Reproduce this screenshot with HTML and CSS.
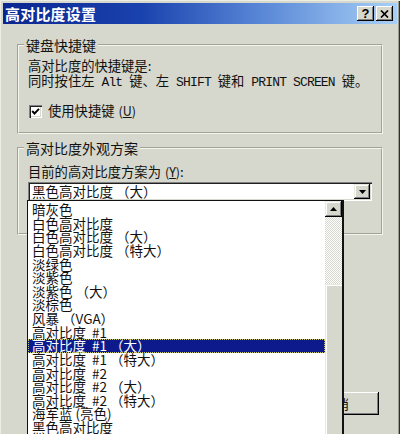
FILE: index.html
```html
<!DOCTYPE html>
<html lang="zh-CN">
<head>
<meta charset="utf-8">
<title>高对比度设置</title>
<link rel="stylesheet" href="styles.css">
</head>
<body>
<div class="window">
  <div class="titlebar">
    <span class="title">高对比度设置</span>
    <div class="tb-buttons">
      <span class="tb-btn help">?</span>
      <span class="tb-btn close"><svg width="9" height="8" viewBox="0 0 9 8"><path d="M1 0.5 L8 7.5 M8 0.5 L1 7.5" stroke="#000" stroke-width="1.7" fill="none"/></svg></span>
    </div>
  </div>
  <div class="content">
    <fieldset class="group g1">
      <legend>键盘快捷键</legend>
      <p class="line first">高对比度的快捷键是:</p>
      <p class="line">同时按住左<span class="mono"> Alt </span>键、左<span class="mono"> SHIFT </span>键和<span class="mono"> PRINT SCREEN </span>键。</p>
      <label class="check"><span class="box"><svg width="9" height="9" viewBox="0 0 9 9"><polyline points="1.2,4 3.5,6.5 8,1.8" stroke="#000" stroke-width="1.9" fill="none"/></svg></span>使用快捷键<span class="acc">(<u>U</u>)</span></label>
    </fieldset>
    <fieldset class="group g2">
      <legend>高对比度外观方案</legend>
      <p class="label2">目前的高对比度方案为<span class="acc">(<u>Y</u>)</span>:</p>
      <div class="combo">
        <span class="combo-text">黑色高对比度 （大）</span>
        <span class="combo-btn"><svg width="7" height="4" viewBox="0 0 7 4"><polygon points="0,0 7,0 3.5,4" fill="#000"/></svg></span>
      </div>
    </fieldset>
    <div class="actions"><span class="btn">取消</span></div>
  </div>
  <div class="dropdown">
    <ul class="list">
      <li>暗灰色</li>
      <li>白色高对比度</li>
      <li>白色高对比度 （大）</li>
      <li>白色高对比度 （特大）</li>
      <li>淡绿色</li>
      <li>淡紫色</li>
      <li>淡紫色 （大）</li>
      <li>淡棕色</li>
      <li>风暴 （VGA）</li>
      <li>高对比度  #1</li>
      <li class="selected">高对比度  #1 （大）</li>
      <li>高对比度  #1 （特大）</li>
      <li>高对比度  #2</li>
      <li>高对比度  #2 （大）</li>
      <li>高对比度  #2 （特大）</li>
      <li>海军蓝 (亮色)</li>
      <li>黑色高对比度</li>
    </ul>
    <div class="scrollbar">
      <span class="sb-up"><svg width="7" height="4" viewBox="0 0 7 4"><polygon points="0,4 7,4 3.5,0" fill="#000"/></svg></span>
      <span class="sb-track"></span>
      <span class="sb-thumb"></span>
    </div>
  </div>
</div>
</body>
</html>
```
FILE: styles.css
```css
html, body {
  margin: 0;
  padding: 0;
}
body {
  width: 400px;
  height: 434px;
  overflow: hidden;
  background: #d6d8cd;
  font-family: "Noto Sans CJK SC", "Noto Sans", sans-serif;
  color: #111;
}
.window {
  position: relative;
  width: 400px;
  height: 434px;
  box-sizing: border-box;
  padding: 3px 3px 0 3px;
  box-shadow: inset 1px 1px 0 #eceee4, inset -1px 0 0 #303030, inset -2px 0 0 #9a9c94;
}
.titlebar {
  height: 21px;
  display: flex;
  align-items: center;
  justify-content: space-between;
  padding: 0 4px 0 2px;
  background: linear-gradient(to right, #0a2690 0%, #1a42ae 35%, #5886d6 65%, #a8d0f6 100%);
}
.title {
  color: #fff;
  font-weight: bold;
  font-size: 15px;
  line-height: 21px;
  letter-spacing: 0.2px;
}
.tb-buttons {
  display: flex;
  gap: 2px;
}
.tb-btn {
  width: 17px;
  height: 15px;
  box-sizing: border-box;
  background: #d6d8cd;
  box-shadow: inset -1px -1px 0 #000, inset 1px 1px 0 #fff, inset -2px -2px 0 #808080;
  display: flex;
  align-items: center;
  justify-content: center;
  font-family: "Liberation Sans", sans-serif;
  font-weight: bold;
  font-size: 13px;
  line-height: 15px;
  color: #000;
}
.content {
  padding: 13px 14px 0 14px;
}
.group {
  margin: 0;
  padding: 0 9px;
  border: 2px groove #f4f6ec;
  min-width: 0;
}
.group legend {
  padding: 0 2px;
  margin-left: -4px;
  font-size: 14px;
  line-height: 16px;
}
.line {
  margin: 0;
  font-size: 13.3px;
  line-height: 15px;
  white-space: nowrap;
}
.line.first {
  margin-top: 5px;
}
.mono {
  font-family: "Liberation Mono", monospace;
  font-size: 13px;
  letter-spacing: -0.85px;
  white-space: pre;
}
.acc {
  font-size: 12.5px;
  margin-left: 4px;
}
.check {
  display: flex;
  align-items: center;
  margin-top: 13px;
  height: 16px;
  font-size: 13.3px;
  line-height: 16px;
}
.box {
  width: 13px;
  height: 13px;
  box-sizing: border-box;
  margin: 0 6px 0 1px;
  background: #fff;
  box-shadow: inset 1px 1px 0 #808080, inset 2px 2px 0 #202020, inset -1px -1px 0 #fff, inset -2px -2px 0 #d6d8cd;
  display: flex;
  align-items: center;
  justify-content: center;
}
.g1 {
  padding-bottom: 13px;
}
.g2 {
  margin-top: 6px;
  padding-bottom: 32px;
}
.label2 {
  margin: 8px 0 0 0;
  font-size: 13.3px;
  line-height: 16px;
}
.combo {
  margin-top: 2px;
  height: 19px;
  box-sizing: border-box;
  padding: 2px;
  background: #fff;
  box-shadow: inset 1px 1px 0 #808080, inset 2px 2px 0 #202020, inset -1px -1px 0 #fff, inset -2px -2px 0 #d6d8cd;
  display: flex;
  align-items: center;
  justify-content: space-between;
}
.combo-text {
  padding-left: 2px;
  font-size: 13.5px;
  line-height: 15px;
  white-space: pre;
}
.combo-btn, .sb-up {
  width: 16px;
  height: 15px;
  box-sizing: border-box;
  background: #d6d8cd;
  box-shadow: inset -1px -1px 0 #000, inset 1px 1px 0 #e8eae0, inset -2px -2px 0 #808080, inset 2px 2px 0 #fff;
  display: flex;
  align-items: center;
  justify-content: center;
}
.actions {
  display: flex;
  justify-content: flex-end;
  margin-top: 157px;
  padding-right: 4px;
}
.btn {
  width: 86px;
  height: 23px;
  box-sizing: border-box;
  background: #d6d8cd;
  box-shadow: inset -1px -1px 0 #000, inset 1px 1px 0 #fff, inset -2px -2px 0 #808080;
  display: flex;
  align-items: center;
  justify-content: center;
  font-size: 13px;
}
.dropdown {
  position: absolute;
  left: 27px;
  top: 200px;
  width: 317px;
  height: 250px;
  box-sizing: border-box;
  border: 1px solid #111;
  border-right-width: 2px;
  background: #fff;
  display: flex;
}
.list {
  flex: 1;
  margin: 0;
  padding: 2px 0 0 0;
  list-style: none;
}
.list li {
  height: 13.625px;
  line-height: 13.625px;
  padding-left: 4px;
  font-size: 13.5px;
  white-space: pre;
  color: #111;
}
.list li.selected {
  background: #0c1a8c;
  color: #fff;
  outline: 1px dotted #c8c870;
  outline-offset: -1px;
}
.scrollbar {
  width: 17px;
  display: flex;
  flex-direction: column;
}
.sb-up {
  width: 17px;
  height: 16px;
  flex: none;
}
.sb-track {
  height: 67px;
  flex: none;
  background: repeating-conic-gradient(#ffffff 0 25%, #d6d8cd 0 50%) 0 0 / 2px 2px;
}
.sb-thumb {
  flex: 1;
  background: #d6d8cd;
  box-shadow: inset 1px 1px 0 #e8eae0, inset 2px 2px 0 #fff;
}
```
